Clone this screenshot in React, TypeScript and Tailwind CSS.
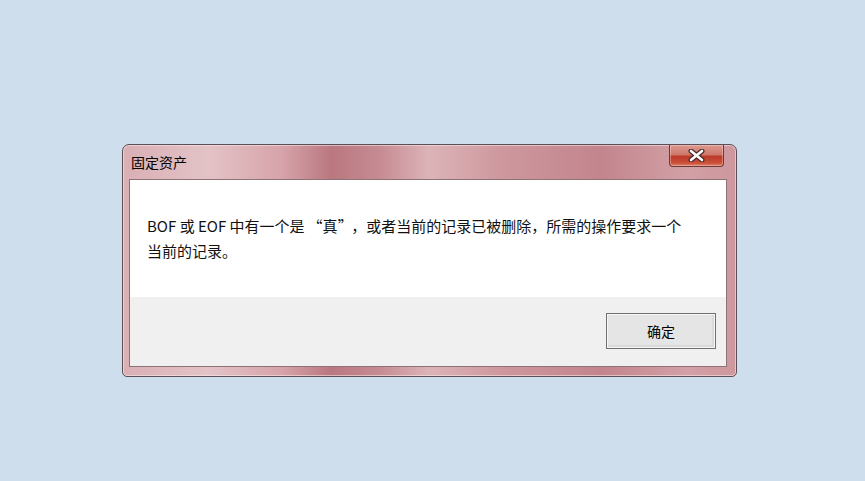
const cjk = { fontFamily: '"Noto Sans CJK SC", "Liberation Sans", sans-serif' };

function CloseButton() {
  return (
    <div className="absolute right-[12px] top-0 flex h-[22px] w-[55px] items-center justify-center rounded-b-[4px] border border-t-0 border-[#6b3a36] bg-[linear-gradient(180deg,#dc9a90_0%,#d0796c_45%,#bb3a2a_55%,#cc5038_85%,#da8066_100%)] shadow-[inset_0_0_0_1px_rgba(255,220,210,0.4)]">
      <svg width="17" height="13" viewBox="0 0 17 13">
        <path
          d="M3 2 L14 11 M14 2 L3 11"
          stroke="#4a2a28"
          strokeWidth="5"
          strokeLinecap="round"
        />
        <path
          d="M3 2 L14 11 M14 2 L3 11"
          stroke="#ffffff"
          strokeWidth="2.6"
          strokeLinecap="round"
        />
      </svg>
    </div>
  );
}

export default function App() {
  return (
    <div className="min-h-screen w-full bg-[#cfdeec] pl-[122px] pt-[144px]" style={cjk}>
      <div className="relative flex h-[233px] w-[615px] flex-col rounded-t-[7px] rounded-b-[5px] border border-[#5a4f55] bg-[linear-gradient(90deg,#d9afb4_0%,#e3c3c7_14%,#d6a3a9_26%,#ba7780_34%,#c68c93_42%,#dcb4b8_50%,#cd979d_62%,#c3858d_78%,#d2a0a6_92%,#cd979d_100%)] px-[6px] pb-[9px] shadow-[inset_0_0_0_1px_rgba(255,235,238,0.55)]">
        <CloseButton />
        <div className="flex h-[34px] items-center pl-[2px] pt-[1px] text-[14px] text-black">
          固定资产
        </div>
        <div className="mr-[3px] flex flex-1 flex-col border border-[#8d7378] bg-white">
          <div className="h-[117px] pl-[17px] pt-[33px] text-[15px] leading-[25px] text-[#111]">
            <div>
              BOF 或 EOF 中有一个是<span className="ml-[3px]">“</span>真<span className="mr-[6px]">”</span>，或者当前的记录已被删除，所需的操作要求一个
            </div>
            <div>当前的记录。</div>
          </div>
          <div className="flex flex-1 justify-end bg-[#f0f0f0] pr-[10px] pt-[16px]">
            <button className="h-[36px] w-[110px] border border-[#707070] bg-[#e5e5e5] text-[14px] text-black shadow-[inset_0_0_0_1px_#f6f6f6,inset_-1px_-1px_0_2px_#dadada]">
              确定
            </button>
          </div>
        </div>
      </div>
    </div>
  );
}
